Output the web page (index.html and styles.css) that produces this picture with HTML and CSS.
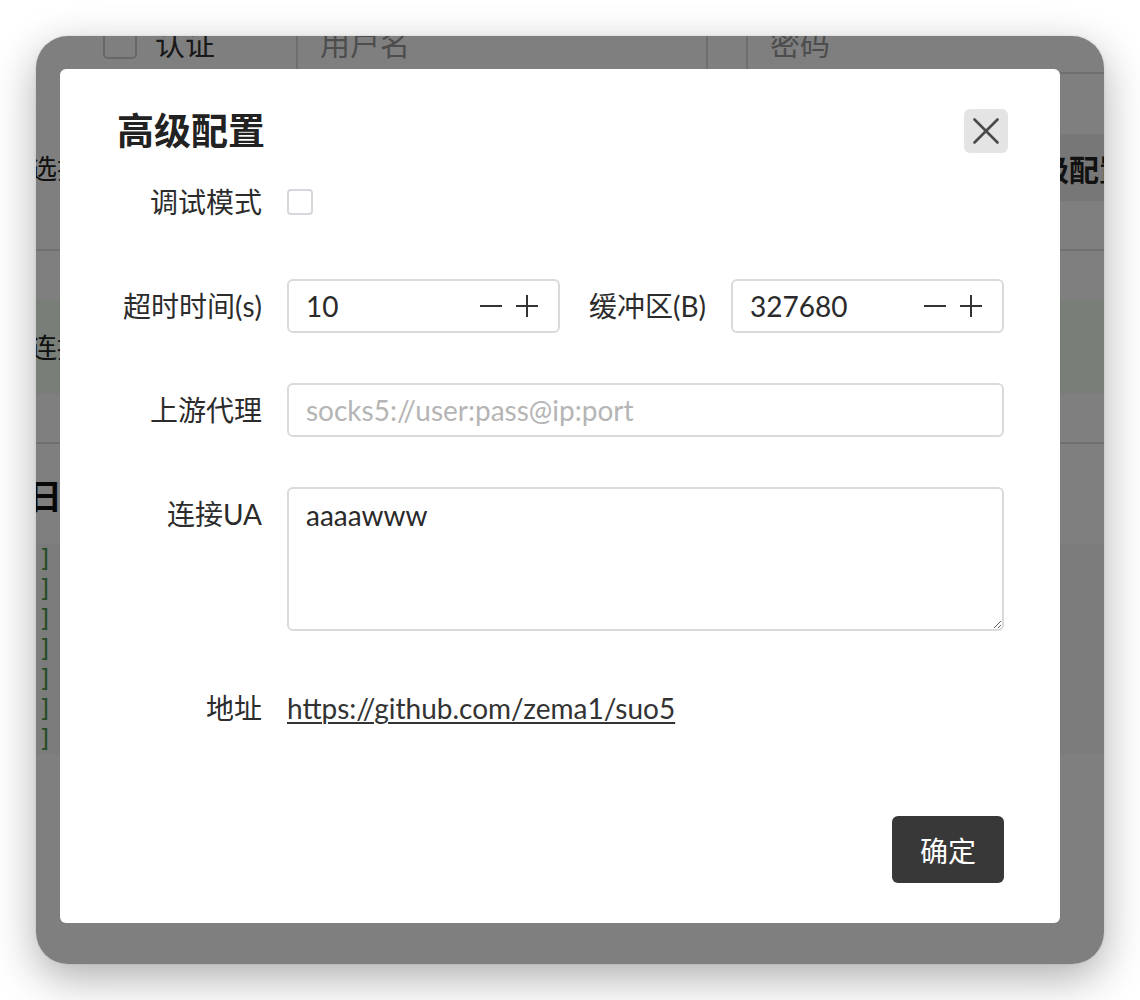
FILE: index.html
```html
<!DOCTYPE html>
<html lang="zh-CN">
<head>
<meta charset="utf-8">
<title>高级配置</title>
<link rel="stylesheet" href="styles.css">
</head>
<body>
<div class="window">
  <div class="app">
    <div class="app-scroll">
      <div class="auth-row">
        <span class="app-check"></span>
        <span class="auth-label">认证</span>
        <div class="app-input user">用户名</div>
        <div class="app-input pass">密码</div>
      </div>
      <div class="mode-row">
        <span class="mode-text">选择</span>
        <span class="adv-btn">高级配置</span>
      </div>
      <div class="divider"></div>
      <div class="connect-row"><span class="connect-text">连接</span></div>
      <div class="divider"></div>
      <div class="log-title">日志</div>
      <div class="log">
        <div class="log-line">]</div>
        <div class="log-line">]</div>
        <div class="log-line">]</div>
        <div class="log-line">]</div>
        <div class="log-line">]</div>
        <div class="log-line">]</div>
        <div class="log-line">]</div>
      </div>
    </div>
  </div>

  <div class="overlay">
    <div class="modal">
      <div class="modal-head">
        <h1 class="modal-title">高级配置</h1>
        <button class="close-btn" aria-label="关闭">
          <svg width="26" height="26" viewBox="0 0 26 26"><path d="M1.5 1.5 L24.5 24.5 M24.5 1.5 L1.5 24.5" stroke="#4a4a4a" stroke-width="2.6" fill="none" stroke-linecap="round"/></svg>
        </button>
      </div>

      <div class="form">
        <label class="label">调试模式</label>
        <div class="field"><input type="checkbox" class="check"></div>

        <label class="label">超时时间(s)</label>
        <div class="field pair">
          <div class="num-field">
            <input class="num-input" type="text" value="10">
            <span class="step"><svg width="22" height="22" viewBox="0 0 22 22"><path d="M0 11 H22" stroke="#333" stroke-width="2"/></svg></span>
            <span class="step"><svg width="22" height="22" viewBox="0 0 22 22"><path d="M0 11 H22 M11 0 V22" stroke="#333" stroke-width="2"/></svg></span>
          </div>
          <label class="label inline">缓冲区(B)</label>
          <div class="num-field">
            <input class="num-input" type="text" value="327680">
            <span class="step"><svg width="22" height="22" viewBox="0 0 22 22"><path d="M0 11 H22" stroke="#333" stroke-width="2"/></svg></span>
            <span class="step"><svg width="22" height="22" viewBox="0 0 22 22"><path d="M0 11 H22 M11 0 V22" stroke="#333" stroke-width="2"/></svg></span>
          </div>
        </div>

        <label class="label">上游代理</label>
        <div class="field"><input class="text-input" type="text" placeholder="socks5://user:pass@ip:port"></div>

        <label class="label top">连接UA</label>
        <div class="field"><textarea class="textarea">aaaawww</textarea></div>

        <label class="label">地址</label>
        <div class="field"><a class="link" href="#">https://github.com/zema1/suo5</a></div>
      </div>

      <div class="modal-foot">
        <button class="ok-btn">确定</button>
      </div>
    </div>
  </div>
</div>
</body>
</html>
```

FILE: styles.css
```css
* { box-sizing: border-box; }

html, body {
  margin: 0;
  padding: 0;
  background: #ffffff;
  width: 1140px;
  height: 1000px;
  overflow: hidden;
  font-family: Lato, "Noto Sans CJK SC", sans-serif;
}

.window {
  position: relative;
  margin: 36px;
  width: 1068px;
  height: 928px;
  border-radius: 32px;
  overflow: hidden;
  background: #ffffff;
  box-shadow: 0 14px 44px rgba(0, 0, 0, 0.32), 0 0 2px rgba(0, 0, 0, 0.15);
}

/* ---------- background application ---------- */
.app {
  height: 100%;
  overflow: hidden;
  color: #333;
}

.app-scroll {
  margin-top: -26px;
}

.auth-row {
  display: flex;
  align-items: center;
  height: 64px;
}

.app-check {
  flex: none;
  width: 34px;
  height: 34px;
  margin-left: 67px;
  border: 2px solid #cfcfd4;
  border-radius: 5px;
  background: #fff;
}

.auth-label {
  flex: none;
  margin-left: 18px;
  font-size: 30px;
  width: 141px;
}

.app-input {
  flex: none;
  height: 64px;
  border: 2px solid #dddddf;
  border-radius: 6px;
  padding-left: 22px;
  display: flex;
  align-items: center;
  font-size: 30px;
  color: #9a9a9a;
}

.app-input.user { width: 412px; }
.app-input.pass { width: 380px; margin-left: 38px; }

.mode-row {
  display: flex;
  align-items: center;
  justify-content: space-between;
  height: 67px;
  margin-top: 60px;
}

.mode-text {
  font-size: 27px;
  margin-left: -6px;
  color: #222;
}

.adv-btn {
  height: 67px;
  display: flex;
  align-items: center;
  padding: 0 24px;
  background: #eeeeee;
  font-size: 30px;
  font-weight: 700;
  color: #222;
  margin-right: -49px;
  border-radius: 6px;
}

.divider {
  height: 2px;
  background: #dedede;
}

.mode-row + .divider { margin-top: 48px; }

.connect-row {
  height: 95px;
  margin-top: 48px;
  margin-bottom: 48px;
  background: #f2fcf2;
  display: flex;
  align-items: center;
}

.connect-text {
  font-size: 27px;
  margin-left: -6px;
  color: #222;
}

.log-title {
  margin-top: 32px;
  margin-left: -8px;
  font-size: 34px;
  font-weight: 700;
  line-height: 40px;
  color: #111;
}

.log {
  margin-top: 28px;
  background: #f8f8f8;
}

.log-line {
  height: 30px;
  line-height: 30px;
  font-size: 24px;
  padding-left: 2px;
  color: #4a9a4a;
  font-family: "DejaVu Sans Mono", monospace;
}

/* ---------- overlay + modal ---------- */
.overlay {
  position: absolute;
  inset: 0;
  background: rgba(0, 0, 0, 0.5);
  display: flex;
  padding: 33px 44px 41px 24px;
}

.modal {
  flex: 1;
  min-width: 0;
  background: #ffffff;
  border-radius: 6px;
  padding: 40px 52px 40px 57px;
  display: flex;
  flex-direction: column;
  color: #2c2c2c;
}

.modal-head {
  display: flex;
  align-items: center;
  justify-content: space-between;
  height: 44px;
}

.modal-title {
  margin: 0;
  font-size: 37px;
  font-weight: 700;
  color: #222;
  line-height: 44px;
}

.close-btn {
  width: 44px;
  height: 44px;
  border: none;
  border-radius: 6px;
  background: #e4e4e4;
  display: flex;
  align-items: center;
  justify-content: center;
  padding: 0;
}

.form {
  margin-top: 22px;
  margin-right: 4px;
  display: grid;
  grid-template-columns: 145px minmax(0, 1fr);
  column-gap: 25px;
  row-gap: 50px;
  align-items: center;
}

.label {
  font-size: 28px;
  text-align: right;
  color: #2c2c2c;
  line-height: 54px;
  white-space: nowrap;
}

.label.top { align-self: start; }

.label.inline {
  flex: none;
  margin: 0 25px 0 29px;
}

.field {
  min-width: 0;
  min-height: 54px;
  display: flex;
  align-items: center;
}

.check {
  appearance: none;
  -webkit-appearance: none;
  margin: 0;
  width: 26px;
  height: 26px;
  border: 2px solid #d6d6dc;
  border-radius: 4px;
  background: #fff;
}

.pair { display: flex; }

.num-field {
  flex: 1 1 0;
  min-width: 0;
  height: 54px;
  display: flex;
  align-items: center;
  gap: 14px;
  border: 2px solid #dadade;
  border-radius: 6px;
  padding: 0 20px 0 17px;
}

.num-input {
  flex: 1 1 0;
  width: 0;
  min-width: 0;
  border: none;
  outline: none;
  padding: 0;
  font-family: inherit;
  font-size: 28px;
  color: #2a2a2a;
  background: transparent;
}

.step {
  flex: none;
  display: flex;
  width: 22px;
  height: 22px;
}

.text-input {
  width: 100%;
  height: 54px;
  border: 2px solid #dadade;
  border-radius: 6px;
  padding: 0 17px;
  font-family: inherit;
  font-size: 28px;
  color: #2a2a2a;
  outline: none;
}

.text-input::placeholder { color: #b5b5b5; }

.textarea {
  display: block;
  width: 100%;
  height: 144px;
  border: 2px solid #dadade;
  border-radius: 6px;
  padding: 8px 17px;
  font-family: inherit;
  font-size: 28px;
  line-height: 36px;
  color: #2a2a2a;
  outline: none;
  resize: both;
}

.link {
  font-size: 28px;
  color: #333;
  text-decoration: underline;
  text-decoration-thickness: 2px;
  text-underline-offset: 3px;
}

.modal-foot {
  margin-top: auto;
  display: flex;
  justify-content: flex-end;
  margin-right: 4px;
}

.ok-btn {
  width: 112px;
  height: 67px;
  border: none;
  border-radius: 6px;
  background: #383838;
  color: #ffffff;
  font-family: inherit;
  font-size: 28px;
  padding: 0;
}
```
